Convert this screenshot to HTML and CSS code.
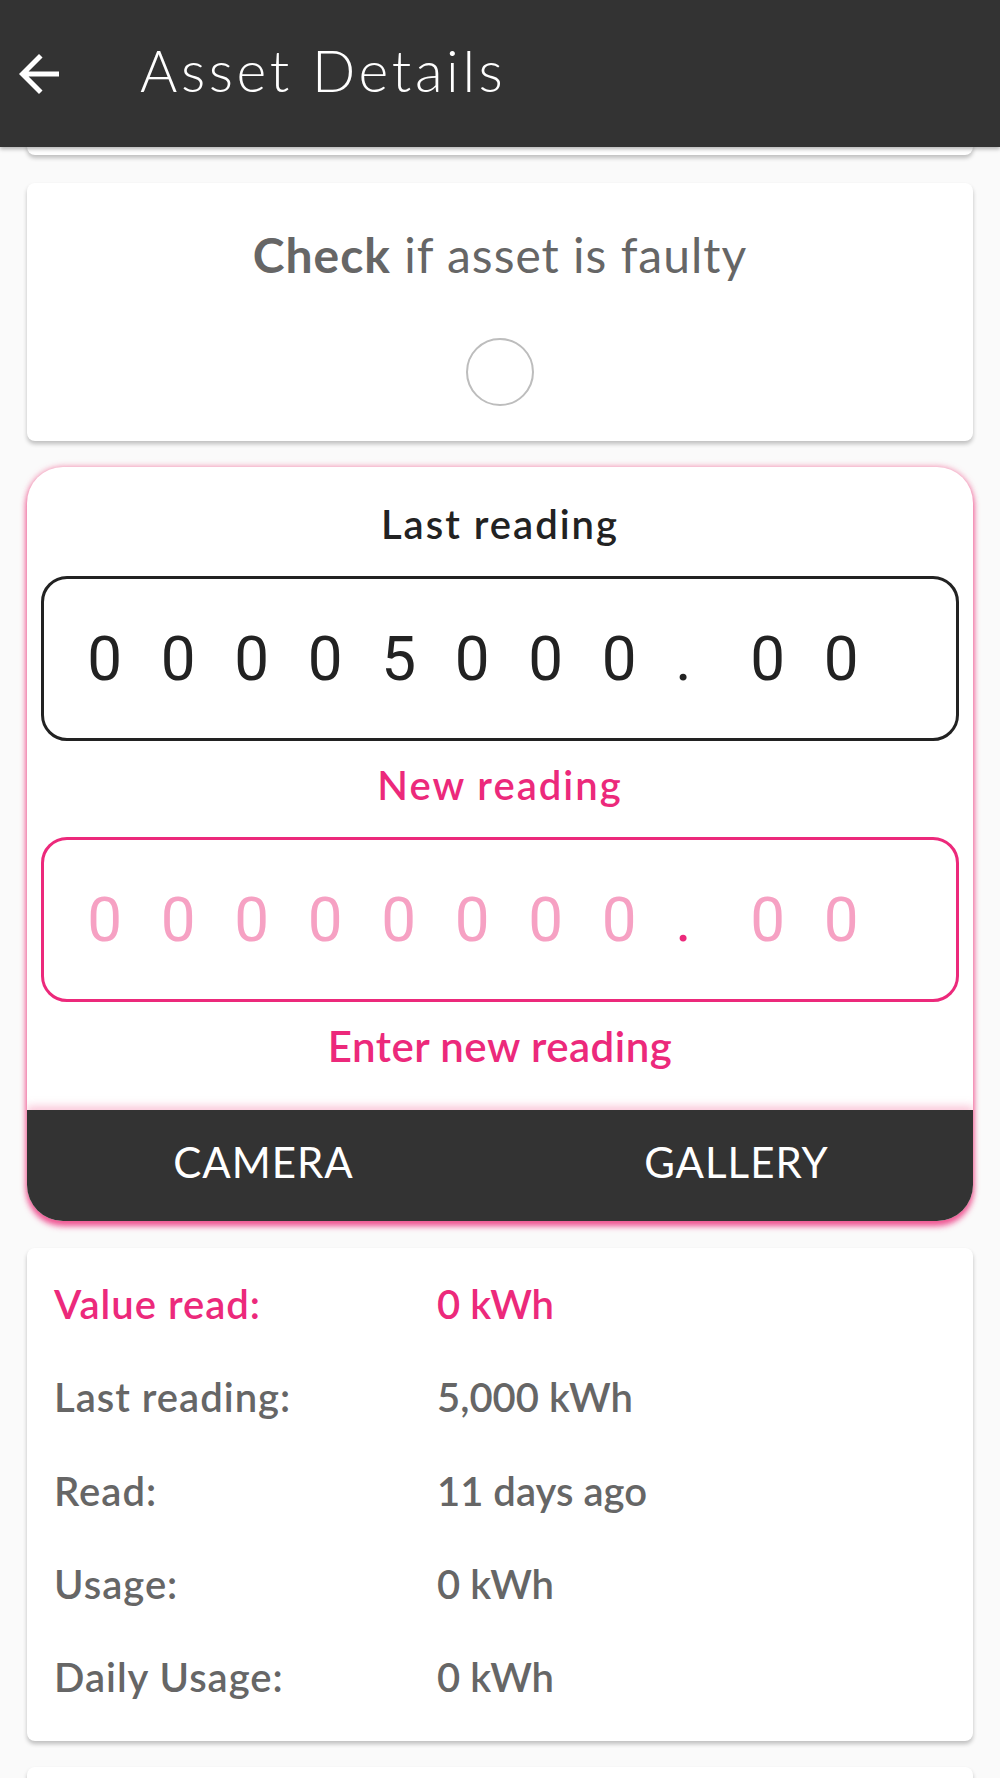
FILE: index.html
```html
<!DOCTYPE html>
<html lang="en">
<head>
    <meta charset="UTF-8">
    <meta name="viewport" content="width=device-width, initial-scale=1.0">
    <title>Asset Details</title>

    <link rel="stylesheet" href="styles.css">
</head>
<body>

    <header class="app-bar">
        <svg class="back" viewBox="0 0 24 24" width="60" height="60">
            <path d="M20 11H7.83l5.59-5.59L12 4l-8 8 8 8 1.41-1.41L7.83 13H20v-2z" fill="#fff"/>
        </svg>
        <h1 class="app-title">Asset Details</h1>
    </header>

    <div class="content">
        <!-- card scrolled under the app bar -->
        <div class="card card-cut"></div>

        <div class="card faulty">
            <p class="faulty-text"><b>Check</b> if asset is faulty</p>
            <span class="radio"></span>
        </div>

        <div class="card reading">
            <div class="reading-body">
                <p class="reading-label">Last reading</p>
                <div class="meter meter-last">
                    <span>0</span><span>0</span><span>0</span><span>0</span><span>5</span><span>0</span><span>0</span><span>0</span>
                    <span class="dot">.</span>
                    <span>0</span><span>0</span>
                </div>

                <p class="reading-label pink">New reading</p>
                <div class="meter meter-new">
                    <span>0</span><span>0</span><span>0</span><span>0</span><span>0</span><span>0</span><span>0</span><span>0</span>
                    <span class="dot">.</span>
                    <span>0</span><span>0</span>
                </div>

                <p class="reading-hint">Enter new reading</p>
            </div>
            <div class="reading-actions">
                <button>CAMERA</button>
                <button>GALLERY</button>
            </div>
        </div>

        <div class="card info">
            <div class="info-row pink"><span class="info-label">Value read:</span><span>0 kWh</span></div>
            <div class="info-row"><span class="info-label">Last reading:</span><span>5,000 kWh</span></div>
            <div class="info-row"><span class="info-label">Read:</span><span>11 days ago</span></div>
            <div class="info-row"><span class="info-label">Usage:</span><span>0 kWh</span></div>
            <div class="info-row"><span class="info-label">Daily Usage:</span><span>0 kWh</span></div>
        </div>

        <div class="card card-next"></div>
    </div>

</body>
</html>
```

FILE: styles.css
```css
body {
    margin: 0;
    background-color: #fafafa;
    font-family: Lato, "Noto Sans", sans-serif;
    height: 1778px;
    overflow: hidden;
}
p {
    margin: 0;
}
.app-bar {
    position: relative;
    z-index: 2;
    height: 147px;
    background-color: #333333;
    display: flex;
    align-items: center;
    padding-left: 9px;
    box-shadow: 0 2px 4px rgba(0, 0, 0, 0.3);
}
.back {
    display: block;
    margin-right: 71px;
}
.app-title {
    margin: 0 0 6px;
    color: #fff;
    font-weight: 300;
    font-size: 57px;
    letter-spacing: 3.6px;
    line-height: 1;
}
.content {
    padding: 0 27px;
}
.card {
    background-color: #fff;
    border-radius: 8px;
    box-shadow: 0 3px 4px rgba(0, 0, 0, 0.24);
    margin-bottom: 26px;
}
.card-cut {
    height: 12px;
    margin-top: -4px;
    border-radius: 0 0 8px 8px;
    margin-bottom: 28px;
}
.faulty {
    height: 258px;
    display: flex;
    flex-direction: column;
    align-items: center;
    padding-top: 42px;
    box-sizing: border-box;
}
.faulty-text {
    color: #666;
    font-size: 48px;
    letter-spacing: 1px;
    line-height: 60px;
}
.radio {
    display: block;
    width: 64px;
    height: 64px;
    border: 2px solid #bdbdbd;
    border-radius: 50%;
    margin-top: 53px;
}
.reading {
    border-radius: 36px;
    overflow: hidden;
    box-shadow: 0 0 6px rgba(240, 98, 146, 0.75), 0 5px 6px rgba(236, 41, 123, 0.8);
    margin-bottom: 27px;
}
.reading-body {
    padding: 31px 14px 38px;
    text-align: center;
}
.reading-label {
    color: #222;
    font-size: 40px;
    font-weight: 600;
    letter-spacing: 2px;
    line-height: 52px;
    margin-bottom: 26px;
}
.reading-label.pink {
    color: #ec297b;
    margin-top: 18px;
}
.meter {
    height: 159px;
    border: 3px solid #222;
    border-radius: 26px;
    display: flex;
    align-items: center;
    padding-left: 24px;
    font-family: Roboto, sans-serif;
    font-size: 62px;
    color: #222;
}
.meter span {
    width: 73.5px;
    text-align: center;
}
.meter .dot {
    width: 75px;
    padding-right: 20px;
    box-sizing: border-box;
}
.meter-new {
    border-color: #ec297b;
    color: #f6a1c3;
}
.meter-new .dot {
    color: #ec297b;
}
.reading-hint {
    color: #ec297b;
    font-size: 42px;
    font-weight: 600;
    letter-spacing: 0.5px;
    line-height: 52px;
    margin-top: 18px;
}
.reading-actions {
    height: 111px;
    background-color: #333333;
    display: flex;
    box-shadow: 0 -4px 8px rgba(240, 98, 146, 0.35);
}
.reading-actions button {
    flex: 1;
    background: none;
    border: none;
    padding: 0 0 8px;
    color: #fff;
    font-family: Lato, "Noto Sans", sans-serif;
    font-size: 42px;
    letter-spacing: 1px;
}
.info {
    height: 493px;
    padding: 10px 27px 0;
    box-sizing: border-box;
}
.info-row {
    display: flex;
    color: #666;
    font-size: 40px;
    font-weight: 600;
    line-height: 93.25px;
}
.info-row.pink {
    color: #ec297b;
}
.info-label {
    width: 383px;
    letter-spacing: 1px;
}
.card-next {
    height: 40px;
}
```
